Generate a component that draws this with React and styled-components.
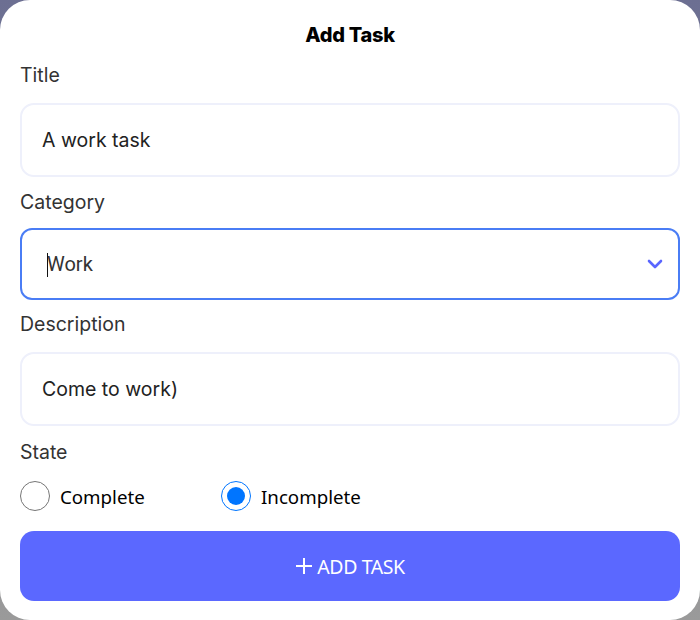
import { useState } from 'react';
import styled, { createGlobalStyle } from 'styled-components';

const GlobalStyle = createGlobalStyle`
	html, body {
		margin: 0;
		padding: 0;
		height: 620px;
		background: linear-gradient(180deg, #6c6f92 0%, #9a9a9a 100%);
	}
	* {
		box-sizing: border-box;
	}
`;

const Modal = styled.form`
	width: 700px;
	height: 620px;
	background: #fff;
	border-radius: 30px;
	padding: 24px 20px 0;
	display: flex;
	flex-direction: column;
	font-family: Inter, 'Noto Sans', sans-serif;
`;

const Heading = styled.h2`
	margin: 0 0 18px;
	font-size: 20px;
	line-height: 22px;
	font-weight: 800;
	text-align: center;
	color: #000;
	letter-spacing: -0.3px;
`;

const Label = styled.label`
	display: block;
	font-size: 19.5px;
	line-height: 22px;
	color: #333;
	margin: ${({ $top }) => $top || 0}px 0 ${({ $bottom }) => $bottom || 17}px;
`;

const TextInput = styled.input`
	width: 100%;
	height: 74px;
	border: 2px solid #eef0fb;
	border-radius: 14px;
	padding: 0 20px;
	font-family: Inter, sans-serif;
	font-size: 19.5px;
	color: #222;
	outline: none;
`;

const SelectBox = styled.div`
	position: relative;
	height: 72px;
	border: 2px solid #4a7df5;
	border-radius: 12px;
	display: flex;
	align-items: center;
	padding: 0 15px 0 25px;
`;

const NativeSelect = styled.select`
	appearance: none;
	border: none;
	outline: none;
	background: transparent;
	flex: 1;
	height: 100%;
	font-family: Roboto, 'Liberation Sans', sans-serif;
	font-size: 20px;
	color: #333;
	padding: 0;
`;

const Caret = styled.span`
	position: absolute;
	left: 25px;
	top: 23px;
	width: 1px;
	height: 24px;
	background: #111;
`;

const Chevron = () => (
	<svg width="16" height="10" viewBox="0 0 16 10" fill="none">
		<path d="M2 2l6 6 6-6" stroke="#5a66ff" strokeWidth="2.6" strokeLinecap="round" strokeLinejoin="round" />
	</svg>
);

const RadioRow = styled.div`
	display: flex;
	align-items: center;
	margin-bottom: 20px;
`;

const RadioOption = styled.label`
	display: flex;
	align-items: center;
	gap: 10px;
	width: 201px;
	font-family: 'Noto Sans', sans-serif;
	font-size: 18.7px;
	color: #000;
	cursor: pointer;

	& input {
		width: 30px;
		height: 30px;
		margin: 0;
	}
`;

const SubmitButton = styled.button`
	height: 70px;
	border: none;
	border-radius: 14px;
	background: #5b68ff;
	color: #fff;
	font-family: 'Noto Sans', sans-serif;
	font-size: 19.5px;
	display: flex;
	align-items: center;
	justify-content: center;
	gap: 4px;
	letter-spacing: -0.4px;
`;

const Plus = () => (
	<svg width="18" height="18" viewBox="0 0 18 18">
		<path d="M9 1v16M1 9h16" stroke="#fff" strokeWidth="2" />
	</svg>
);

export default function App() {
	const [title, setTitle] = useState('A work task');
	const [category, setCategory] = useState('Work');
	const [description, setDescription] = useState('Come to work)');
	const [state, setState] = useState('incomplete');

	return (
		<>
			<GlobalStyle />
			<Modal onSubmit={(e) => e.preventDefault()}>
				<Heading>Add Task</Heading>

				<Label>Title</Label>
				<TextInput value={title} onChange={({ target }) => setTitle(target.value)} />

				<Label $top={14} $bottom={15}>Category</Label>
				<SelectBox>
					<NativeSelect value={category} onChange={({ target }) => setCategory(target.value)}>
						<option value="Work">Work</option>
						<option value="Personal">Personal</option>
						<option value="Shopping">Shopping</option>
					</NativeSelect>
					<Caret />
					<Chevron />
				</SelectBox>

				<Label $top={13}>Description</Label>
				<TextInput value={description} onChange={({ target }) => setDescription(target.value)} />

				<Label $top={15} $bottom={18}>State</Label>
				<RadioRow>
					<RadioOption>
						<input
							type="radio"
							name="state"
							checked={state === 'complete'}
							onChange={() => setState('complete')}
						/>
						Complete
					</RadioOption>
					<RadioOption>
						<input
							type="radio"
							name="state"
							checked={state === 'incomplete'}
							onChange={() => setState('incomplete')}
						/>
						Incomplete
					</RadioOption>
				</RadioRow>

				<SubmitButton type="submit">
					<Plus />
					ADD TASK
				</SubmitButton>
			</Modal>
		</>
	);
}
